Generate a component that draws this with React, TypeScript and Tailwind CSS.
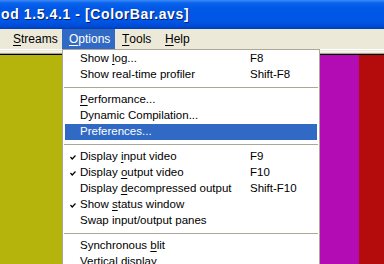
import React from 'react';

type Item =
  | { sep: true }
  | { sep?: false; label: React.ReactNode; key?: string; checked?: boolean; active?: boolean };

const U: React.FC<{ children: React.ReactNode }> = ({ children }) => <span className="underline underline-offset-2">{children}</span>;

const items: Item[] = [
  { label: <>Show <U>l</U>og...</>, key: 'F8' },
  { label: 'Show real-time profiler', key: 'Shift-F8' },
  { sep: true },
  { label: <><U>P</U>erformance...</> },
  { label: 'Dynamic Compilation...' },
  { label: 'Preferences...', active: true },
  { sep: true },
  { label: <>Display <U>i</U>nput video</>, key: 'F9', checked: true },
  { label: <>Display <U>o</U>utput video</>, key: 'F10', checked: true },
  { label: <>Display <U>d</U>ecompressed output</>, key: 'Shift-F10' },
  { label: <>Show <U>s</U>tatus window</>, checked: true },
  { label: 'Swap input/output panes' },
  { sep: true },
  { label: <>Synchronous <U>b</U>lit</> },
  { label: 'Vertical display' },
];

const Check = () => (
  <svg width="6" height="5" viewBox="0 0 6 5" className="block">
    <path d="M0.5 2 L2.2 4 L5.5 0.5" stroke="#000" strokeWidth="1.2" fill="none" />
  </svg>
);

export default function App() {
  return (
    <div className="relative w-[384px] h-[264px] overflow-hidden bg-[#ECE9D8] font-['Liberation_Sans',Arial,sans-serif] text-[12px] text-black">
      {/* title bar */}
      <div className="h-[29px] flex items-center bg-[linear-gradient(to_bottom,#3C8DF6_0px,#0A63EE_3px,#0058E6_8px,#0055E5_22px,#0048D0_27px,#003CB0_29px)]">
        <span className="pl-[1px] text-white font-bold text-[14px] tracking-[0.6px] [text-shadow:1px_1px_0_#0A1E6A] whitespace-nowrap">
          od 1.5.4.1 - [ColorBar.avs]
        </span>
      </div>

      {/* menu bar */}
      <div className="h-[20px] flex items-stretch pl-[6px] bg-[#ECE9D8]">
        <div className="w-[56px] flex items-center pl-[7px]"><U>S</U>treams</div>
        <div className="w-[53px] flex items-center pl-[7px] bg-[#316AC5] text-white"><U>O</U>ptions</div>
        <div className="w-[49px] flex items-center pl-[7px]"><U>T</U>ools</div>
        <div className="w-[36px] flex items-center pl-[1px]"><U>H</U>elp</div>
      </div>

      {/* strip between menu and client */}
      <div className="h-[1px] bg-[#FFFFFF]" />
      <div className="h-[1px] bg-[#ECE9D8]" />
      <div className="h-[1px] bg-[#F8F7F2]" />
      <div className="h-[1px] bg-[#ECE9D8]" />
      <div className="h-[1px] bg-[#A8A698]" />
      <div className="h-[1px] bg-black" />

      {/* color bars */}
      <div className="flex h-[210px]">
        <div className="w-[140px] bg-[#B4B40C]" />
        <div className="w-[90px] bg-[#0CB4B4]" />
        <div className="w-[90px] bg-[#0CB40C]" />
        <div className="w-[39px] bg-[#B40CB4]" />
        <div className="flex-1 bg-[#B40C0C]" />
      </div>

      {/* dropdown menu */}
      <div className="absolute left-[62px] top-[49px] w-[258px] h-[240px] bg-white border border-[#ACA899] p-[1px] pl-[2px] pr-[2px] text-[11.5px]">
        {items.map((it, i) =>
          it.sep ? (
            <div key={i} className="h-[9px] flex items-center -mx-[1px]">
              <div className="h-[1px] w-full bg-[#ACA899]" />
            </div>
          ) : (
            <div
              key={i}
              className={`h-[16px] flex items-center whitespace-nowrap ${it.active ? 'bg-[#316AC5] text-white' : ''}`}
            >
              <div className="w-[15px] flex justify-center pl-[1px]">{it.checked ? <Check /> : null}</div>
              <div className="w-[170px]">{it.label}</div>
              <div>{it.key}</div>
            </div>
          )
        )}
      </div>
    </div>
  );
}
